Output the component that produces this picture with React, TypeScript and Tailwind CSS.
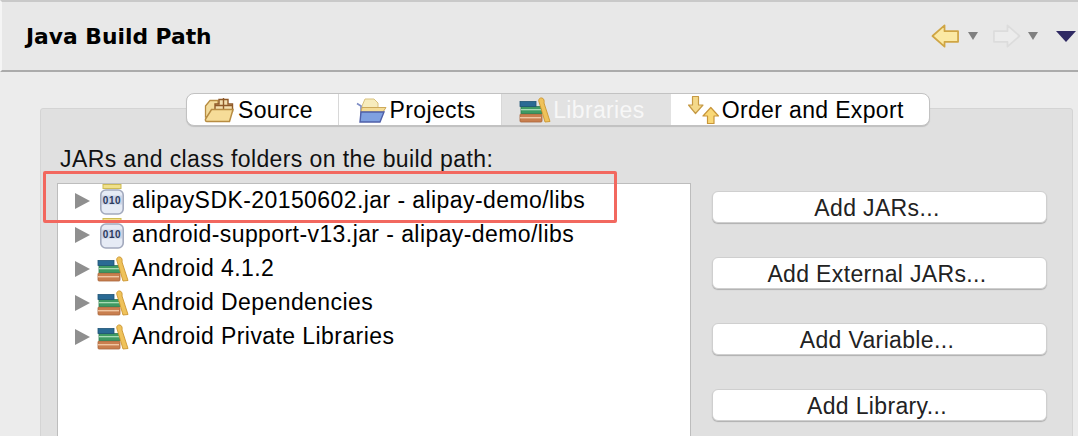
import React from 'react';

const Chevron = () => (
  <svg width="15" height="16" viewBox="0 0 15 16" className="shrink-0">
    <path d="M0 0 L15 8 L0 16 Z" fill="#8f8f8f" />
  </svg>
);

const JarIcon = () => (
  <svg width="24" height="31" viewBox="0 0 24 31" className="shrink-0">
    <rect x="3" y="0.5" width="18" height="4" fill="#f0e08a" stroke="#cdbb55" strokeWidth="1" />
    <rect x="0.8" y="6" width="22.4" height="24" rx="5" fill="#e6ebf5" stroke="#a2a9bd" strokeWidth="1.6" />
    <rect x="2" y="11.5" width="20" height="9" fill="#ccd5e8" />
    <text x="12" y="19.6" textAnchor="middle" fontFamily="Liberation Sans, sans-serif" fontWeight="700" fontSize="10" letterSpacing="0.6" fill="#2c3b5e">010</text>
  </svg>
);

const BooksIcon = () => (
  <svg width="32" height="26" viewBox="0 0 32 26" className="shrink-0">
    <rect x="1" y="17" width="22" height="8" rx="1" fill="#c97f4f" stroke="#a8643a" strokeWidth="0.8" />
    <rect x="1" y="20" width="21" height="1.4" fill="#f0c6a2" />
    <rect x="2" y="9.5" width="21" height="7" fill="#3f9a63" stroke="#2f7d4d" strokeWidth="0.8" />
    <rect x="2" y="12" width="20" height="1.3" fill="#a8dcb6" />
    <rect x="1" y="4.5" width="16" height="5" fill="#2a6a94" stroke="#1f5476" strokeWidth="0.8" />
    <path d="M20 5 C19 2 21 0.5 23 1 C25 1.5 25.5 4 25 6 L31 24.5 L26 25 L22.5 13 Z" fill="#efc25a" stroke="#cc9530" strokeWidth="0.9" />
  </svg>
);

const SourceIcon = () => (
  <svg width="30" height="26" viewBox="0 0 30 26" className="shrink-0">
    <path d="M1.5 9 L6 3.5 H14 V20 H1.5 Z" fill="#f3dc9c" stroke="#b78c42" strokeWidth="1.3" />
    <path d="M15 2.5 H24 V7 H28.5 V14 H11 V7 H15 Z" fill="#f3dfae" stroke="#8f5a28" strokeWidth="1.4" />
    <path d="M19.5 1 V14 M11 8.5 H28.5" stroke="#8f5a28" strokeWidth="1.4" />
    <path d="M7.5 12.5 H29 L25.5 24.5 H3 Q1 24.5 1.5 22 Z" fill="#f6dc98" stroke="#b78c42" strokeWidth="1.5" />
  </svg>
);

const ProjectsIcon = () => (
  <svg width="32" height="26" viewBox="0 0 32 26" className="shrink-0">
    <path d="M6 9 L9 2 H18 L22 6 V13 H6 Z" fill="#f7ecbd" stroke="#d8c17e" strokeWidth="1" />
    <path d="M1 6.5 L5 9 V23 H8" fill="none" stroke="#7d8cc4" strokeWidth="1.6" />
    <path d="M6 10.5 H30 L27 15 H5 Z" fill="#f4dc96" stroke="#cda95a" strokeWidth="1" />
    <path d="M5 15 H28 L24 25 H4 Z" fill="#7fa0e0" stroke="#4f5fa8" strokeWidth="1.4" />
  </svg>
);

const OrderIcon = () => (
  <svg width="31" height="28" viewBox="0 0 31 28" className="shrink-0">
    <path d="M4.5 1 Q4.5 0.5 5 0.5 H10 Q10.5 0.5 10.5 1 V9 H15 L7.5 17.5 L0.5 9 H4.5 Z" fill="#f4d98a" stroke="#c69a45" strokeWidth="1.2" strokeLinejoin="round" />
    <path d="M19.5 27.5 H26 V20 H30.5 L22.8 11.5 L15 20 H19.5 Z" fill="#f9d876" stroke="#c9963a" strokeWidth="1.2" strokeLinejoin="round" />
  </svg>
);

const ArrowBack = () => (
  <svg width="29" height="26" viewBox="0 0 30 26">
    <path d="M1.5 13 L14 2 V8 H28 V19 H14 V24 Z" fill="#fbe9a4" stroke="#cfa544" strokeWidth="1.8" strokeLinejoin="round" />
  </svg>
);

const ArrowForward = () => (
  <svg width="29" height="26" viewBox="0 0 30 26">
    <path d="M28.5 13 L16 2 V8 H2 V19 H16 V24 Z" fill="#ececec" stroke="#dcdcdc" strokeWidth="1.8" strokeLinejoin="round" />
  </svg>
);

const Caret = ({ color = '#808080', w = 10, h = 8 }: { color?: string; w?: number; h?: number }) => (
  <svg width={w} height={h} viewBox="0 0 10 9" preserveAspectRatio="none">
    <path d="M0 0 H10 L5 9 Z" fill={color} />
  </svg>
);

const tabs = [
  { label: 'Source', icon: <SourceIcon />, width: 'w-[152px]', active: false },
  { label: 'Projects', icon: <ProjectsIcon />, width: 'w-[164px]', active: false },
  { label: 'Libraries', icon: <BooksIcon />, width: 'w-[169px]', active: true },
  { label: 'Order and Export', icon: <OrderIcon />, width: 'w-[259px]', active: false },
];

const entries = [
  { label: 'alipaySDK-20150602.jar - alipay-demo/libs', jar: true },
  { label: 'android-support-v13.jar - alipay-demo/libs', jar: true },
  { label: 'Android 4.1.2', jar: false },
  { label: 'Android Dependencies', jar: false },
  { label: 'Android Private Libraries', jar: false },
];

const buttons = ['Add JARs...', 'Add External JARs...', 'Add Variable...', 'Add Library...'];

function App() {
  return (
    <div className="relative h-[436px] w-[1078px] overflow-hidden bg-[#ececec] font-['Liberation_Sans',Arial,sans-serif] text-[#111]">
      {/* Title bar */}
      <header className="flex h-[72px] items-center justify-between border-t-[2px] border-b-[2px] border-l-[2px] border-t-[#c9c9c9] border-b-[#ababab] border-l-[#f5f5f5] bg-[#e8e8e8] pl-[24px] pr-[2px]">
        <h1 className="pt-[3px] font-['DejaVu_Sans',sans-serif] text-[21.8px] font-bold text-black">Java Build Path</h1>
        <div className="flex items-center">
          <span className="mr-[1px]"><ArrowBack /></span>
          <span className="ml-[7px]"><Caret /></span>
          <span className="ml-[14px]"><ArrowForward /></span>
          <span className="ml-[7px]"><Caret /></span>
          <span className="ml-[18px]"><Caret color="#2f2a63" w={20} h={11} /></span>
        </div>
      </header>

      {/* Tab panel */}
      <main className="relative mt-[36px] ml-[40px] mr-[5px] h-[400px] rounded-t-[3px] border border-[#d4d4d4] bg-[#e0e0e0]">
        <div className="absolute left-[145px] top-[-16px] flex h-[33px] w-[744px] overflow-hidden rounded-[8px] border border-[#c2c2c2] bg-white shadow-[0_1px_1px_rgba(0,0,0,0.15)]">
          {tabs.map((tab, i) => (
            <div
              key={tab.label}
              className={`flex h-full items-center gap-[2px] pl-[17px] ${tab.width} ${i < 2 ? 'border-r border-[#d8d8d8]' : ''} ${tab.active ? 'bg-[#e2e2e2] text-[#f7f7f7]' : 'text-black'}`}
            >
              <span className="w-[32px] shrink-0">{tab.icon}</span>
              <span className="pt-[1px] text-[23px] leading-none tracking-[0.35px]">{tab.label}</span>
            </div>
          ))}
        </div>

        <div className="flex pl-[16px] pt-[37px]">
          <div className="w-[634px]">
            <p className="mb-[11px] pl-[3px] text-[23px] leading-[26px] tracking-[0.4px] text-[#111]">JARs and class folders on the build path:</p>
            <ul className="h-[300px] border border-[#bdbdbd] bg-white">
              {entries.map((entry) => (
                <li key={entry.label} className="flex h-[34px] items-center pl-[17px]">
                  <Chevron />
                  <span className="ml-[7px] flex w-[35px] justify-start">
                    {entry.jar ? <span className="mb-[3px] ml-[3px]"><JarIcon /></span> : <BooksIcon />}
                  </span>
                  <span className="mb-[2px] text-[23px] leading-none tracking-[0.42px] text-black">{entry.label}</span>
                </li>
              ))}
            </ul>
          </div>

          <div className="ml-[21px] flex w-[335px] flex-col gap-[34px] pt-[45px]">
            {buttons.map((label) => (
              <button
                key={label}
                className="h-[32px] rounded-[6px] border border-[#cfcfcf] bg-white pt-[3px] pr-[5px] text-[23px] leading-none tracking-[0.35px] text-[#222] shadow-[0_1px_1px_rgba(0,0,0,0.22)]"
              >
                {label}
              </button>
            ))}
          </div>
        </div>
      </main>

      {/* Red annotation around the first entry */}
      <div className="absolute left-[43px] top-[171px] h-[52px] w-[574px] rounded-[2px] border-[3px] border-[#f2685f]" />
    </div>
  );
}

export default App;
